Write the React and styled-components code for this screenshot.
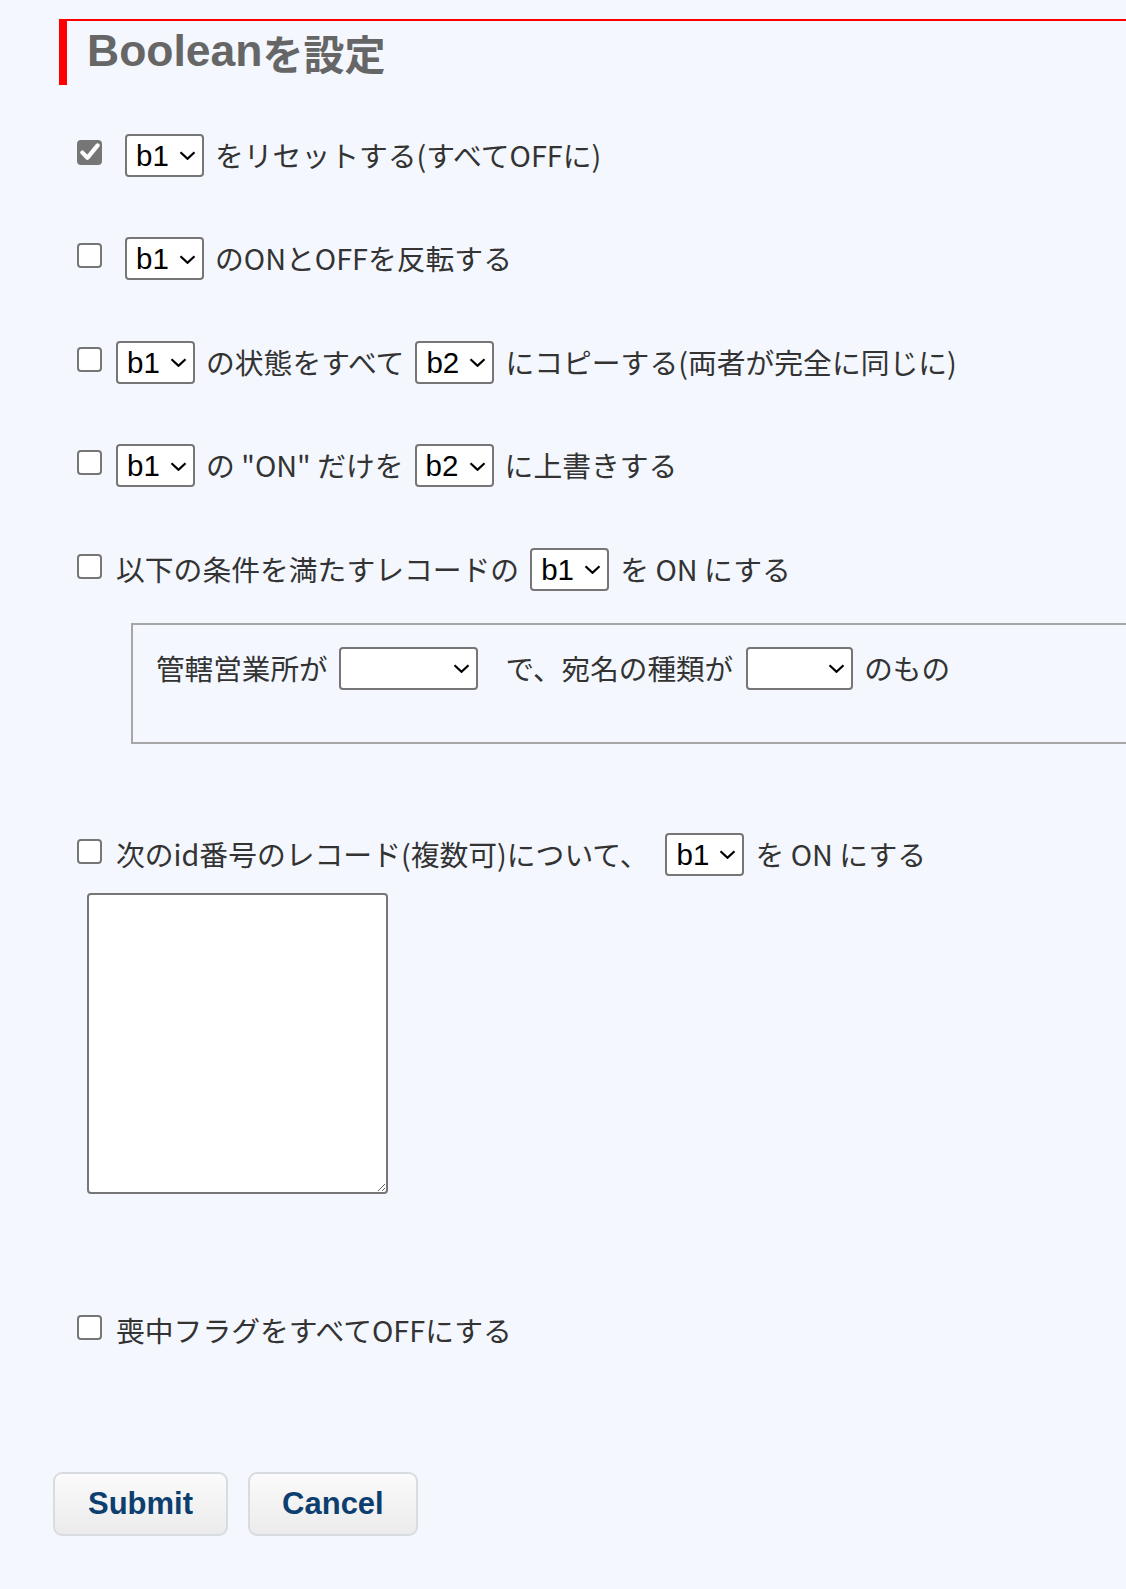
import React from "react";
import styled, { createGlobalStyle } from "styled-components";

const GlobalStyle = createGlobalStyle`
  html, body { margin: 0; padding: 0; }
  body {
    background: #f4f8fe;
    overflow-x: hidden;
    font-family: "Noto Sans CJK JP", "Noto Sans", sans-serif;
  }
`;

const Page = styled.div`
  padding-top: 19px;
  padding-bottom: 54px;
  min-height: 1589px;
  box-sizing: border-box;
`;

const Heading = styled.h2`
  margin: 0 0 0 59px;
  border-top: 2px solid #ff0000;
  border-left: 8px solid #ff0000;
  padding: 0 0 4px 20px;
  box-sizing: content-box;
  height: 60px;
  display: flex;
  align-items: center;
  color: #666666;
  font-family: "Liberation Sans", Arial, sans-serif;
  font-weight: bold;
  font-size: 44.5px;
  line-height: 1;
  white-space: nowrap;
`;

const HeadingJa = styled.span`
  font-family: "Noto Sans CJK JP", sans-serif;
  font-size: 41px;
  font-weight: bold;
  padding-top: 2px;
`;

const Form = styled.form`
  margin: 0;
`;

const Row = styled.div`
  display: flex;
  align-items: center;
  gap: 11px;
  height: 43px;
  margin-top: ${(p) => p.$mt}px;
  padding-left: 77px;
  font-size: 28.8px;
  color: #333333;
  white-space: nowrap;
`;

const Text = styled.span`
  line-height: 1.4;
  margin-left: ${(p) => p.$ml || 0}px;
`;

const CheckBox = styled.span`
  flex: none;
  width: 25px;
  height: 25px;
  box-sizing: border-box;
  border: 2px solid #767676;
  border-radius: 4px;
  background: ${(p) => (p.$checked ? "#767676" : "#ffffff")};
  margin: 0 3px 6px 0;
  display: flex;
  align-items: center;
  justify-content: center;
`;

const SelectWrap = styled.span`
  position: relative;
  display: inline-flex;
  flex: none;
  margin-left: ${(p) => p.$ml || 0}px;
`;

const Select = styled.select`
  appearance: none;
  -webkit-appearance: none;
  box-sizing: border-box;
  width: ${(p) => p.$w}px;
  height: 43px;
  border: 2px solid #767676;
  border-radius: 4px;
  background: #ffffff;
  color: #000000;
  font-family: "Liberation Sans", Arial, sans-serif;
  font-size: 29.5px;
  padding: 0 0 0 9px;
  margin: 0;
  outline: none;
`;

const Chevron = styled.svg`
  position: absolute;
  right: 8px;
  top: 50%;
  margin-top: -4px;
  pointer-events: none;
`;

const CondBox = styled.div`
  margin: 32px 0 0 131px;
  width: 1000px;
  box-sizing: border-box;
  border: 2px solid #a6a6a6;
  padding: 22px 0 52px 23px;
`;

const CondRow = styled.div`
  display: flex;
  align-items: center;
  gap: 11px;
  height: 43px;
  font-size: 28.6px;
  color: #333333;
  white-space: nowrap;
`;

const IdArea = styled.textarea`
  display: block;
  box-sizing: border-box;
  width: 301px;
  height: 301px;
  margin: 17px 0 0 87px;
  border: 2px solid #767676;
  border-radius: 4px;
  background: #ffffff;
  font-size: 16px;
  outline: none;
`;

const Buttons = styled.div`
  display: flex;
  gap: 20px;
  margin: 120px 0 0 53px;
`;

const Button = styled.button`
  box-sizing: border-box;
  height: 64px;
  padding: 0 ${(p) => p.$px}px;
  border: 2px solid #d8dce0;
  border-radius: 9px;
  background: linear-gradient(#fbfbfb, #ebebeb);
  color: #0d3e70;
  font-family: "Liberation Sans", Arial, sans-serif;
  font-weight: bold;
  font-size: 31px;
  cursor: pointer;
`;

function Check({ checked }) {
  return (
    <CheckBox $checked={checked} role="checkbox" aria-checked={checked}>
      {checked && (
        <svg width="20" height="18" viewBox="0 0 20 18">
          <polyline
            points="2.4,9.6 7.4,14.8 17.6,2.4"
            fill="none"
            stroke="#ffffff"
            strokeWidth="4.2"
            strokeLinecap="round"
            strokeLinejoin="round"
          />
        </svg>
      )}
    </CheckBox>
  );
}

function Sel({ w = 79, value = "b1", ml, options }) {
  const opts = options || ["b1", "b2", "b3"];
  return (
    <SelectWrap $ml={ml}>
      <Select $w={w} defaultValue={value}>
        {opts.map((o) => (
          <option key={o} value={o}>
            {o}
          </option>
        ))}
      </Select>
      <Chevron width="17" height="9" viewBox="0 0 17 9">
        <polyline
          points="1.5,1.2 8.5,7.8 15.5,1.2"
          fill="none"
          stroke="#000"
          strokeWidth="2.2"
        />
      </Chevron>
    </SelectWrap>
  );
}

export default function App() {
  return (
    <>
      <GlobalStyle />
      <Page>
        <Heading>
          Boolean<HeadingJa>を設定</HeadingJa>
        </Heading>
        <Form onSubmit={(e) => e.preventDefault()}>
          <Row $mt={48.5}>
            <Check checked />
            <Sel ml={9} />
            <Text>をリセットする(すべてOFFに)</Text>
          </Row>
          <Row $mt={60.5}>
            <Check />
            <Sel ml={9} />
            <Text>のONとOFFを反転する</Text>
          </Row>
          <Row $mt={60.5}>
            <Check />
            <Sel />
            <Text>の状態をすべて</Text>
            <Sel value="b2" />
            <Text>にコピーする(両者が完全に同じに)</Text>
          </Row>
          <Row $mt={60.5}>
            <Check />
            <Sel />
            <Text>の "ON" だけを</Text>
            <Sel value="b2" />
            <Text>に上書きする</Text>
          </Row>
          <Row $mt={60.5}>
            <Check />
            <Text>以下の条件を満たすレコードの</Text>
            <Sel />
            <Text>を ON にする</Text>
          </Row>
          <CondBox>
            <CondRow>
              <Text>管轄営業所が</Text>
              <Sel w={139} value="" options={[""]} />
              <Text $ml={17}>で、宛名の種類が</Text>
              <Sel w={107} ml={2} value="" options={[""]} />
              <Text>のもの</Text>
            </CondRow>
          </CondBox>
          <Row $mt={89}>
            <Check />
            <Text>次のid番号のレコード(複数可)について、</Text>
            <Sel ml={6} />
            <Text>を ON にする</Text>
          </Row>
          <IdArea />
          <Row $mt={115}>
            <Check />
            <Text>喪中フラグをすべてOFFにする</Text>
          </Row>
          <Buttons>
            <Button type="submit" $px={33}>Submit</Button>
            <Button type="button" $px={32}>Cancel</Button>
          </Buttons>
        </Form>
      </Page>
    </>
  );
}
